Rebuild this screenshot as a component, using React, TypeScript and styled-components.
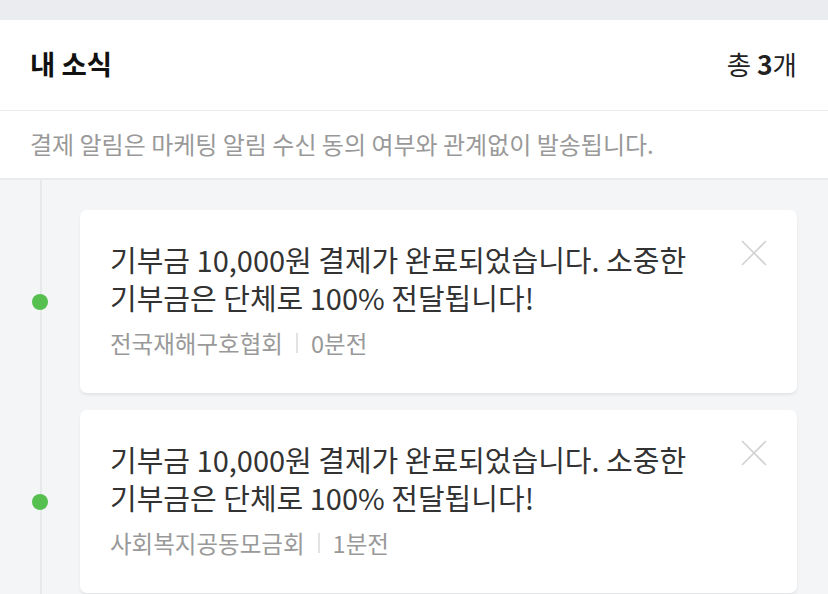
import styled, { createGlobalStyle } from 'styled-components';

type News = {
  id: number;
  message: string;
  org: string;
  time: string;
};

const newsList: News[] = [
  {
    id: 1,
    message: '기부금 10,000원 결제가 완료되었습니다. 소중한 기부금은 단체로 100% 전달됩니다!',
    org: '전국재해구호협회',
    time: '0분전',
  },
  {
    id: 2,
    message: '기부금 10,000원 결제가 완료되었습니다. 소중한 기부금은 단체로 100% 전달됩니다!',
    org: '사회복지공동모금회',
    time: '1분전',
  },
];

const CloseIcon = () => (
  <svg width="26" height="26" viewBox="0 0 26 26" fill="none">
    <path d="M1 1L25 25M25 1L1 25" stroke="#d2d2d2" strokeWidth="1.6" />
  </svg>
);

const NewsItem = (props: News) => {
  return (
    <Item>
      <DotCol>
        <Dot />
      </DotCol>
      <Card>
        <CardBody>
          <Message>{props.message}</Message>
          <Meta>
            <span>{props.org}</span>
            <Bar />
            <span>{props.time}</span>
          </Meta>
        </CardBody>
        <CloseButton aria-label="닫기">
          <CloseIcon />
        </CloseButton>
      </Card>
    </Item>
  );
};

const App = () => {
  return (
    <>
      <GlobalStyle />
      <Page>
        <TopBand />
        <Header>
          <Title>내 소식</Title>
          <Count>
            총 <b>3</b>개
          </Count>
        </Header>
        <Notice>결제 알림은 마케팅 알림 수신 동의 여부와 관계없이 발송됩니다.</Notice>
        <Timeline>
          {newsList.map((news) => (
            <NewsItem key={news.id} {...news} />
          ))}
        </Timeline>
      </Page>
    </>
  );
};

const GlobalStyle = createGlobalStyle`
  html, body {
    margin: 0;
    padding: 0;
    height: 100%;
    overflow: hidden;
    background-color: #f4f5f7;
  }
  body {
    font-family: "Noto Sans CJK KR", "Noto Sans", sans-serif;
    color: #222;
    word-break: keep-all;
  }
`;

const Page = styled.div`
  display: flex;
  flex-direction: column;
  width: 828px;
`;

const TopBand = styled.div`
  height: 20px;
  background-color: #ebecef;
`;

const Header = styled.header`
  display: flex;
  align-items: center;
  justify-content: space-between;
  box-sizing: border-box;
  height: 91px;
  padding: 0 31px 4px 30px;
  background-color: #fff;
  border-bottom: 1px solid #ececec;
`;

const Title = styled.h1`
  margin: 0;
  font-size: 27.5px;
  font-weight: 700;
  color: #111;
`;

const Count = styled.span`
  font-size: 26.5px;
  color: #222;
  b {
    font-weight: 700;
  }
`;

const Notice = styled.p`
  margin: 0;
  display: flex;
  align-items: center;
  box-sizing: border-box;
  height: 69px;
  padding: 0 30px 3px;
  font-size: 24px;
  color: #999;
  background-color: #fff;
  border-bottom: 2px solid #e9eaec;
`;

const Timeline = styled.div`
  display: flex;
  flex-direction: column;
  gap: 17px;
  padding: 30px 31px 30px 0;
  background: linear-gradient(#e7e8ea, #e7e8ea) no-repeat 40px 0 / 2px 100%, #f4f5f7;
`;

const Item = styled.div`
  display: flex;
  align-items: center;
`;

const DotCol = styled.div`
  display: flex;
  justify-content: center;
  width: 82px;
  flex-shrink: 0;
  margin-left: -1px;
  margin-right: -1px;
`;

const Dot = styled.span`
  width: 16px;
  height: 16px;
  border-radius: 50%;
  background-color: #55c04f;
`;

const Card = styled.div`
  flex: 1;
  display: flex;
  gap: 20px;
  padding: 30px 30px 35px 30px;
  background-color: #fff;
  border-radius: 7px;
  box-shadow: 0 2px 3px rgba(0, 0, 0, 0.07);
`;

const CardBody = styled.div`
  flex: 1;
  display: flex;
  flex-direction: column;
  gap: 12px;
`;

const Message = styled.p`
  margin: 0;
  font-size: 29px;
  line-height: 38px;
  color: #333;
`;

const Meta = styled.div`
  display: flex;
  align-items: center;
  gap: 13px;
  height: 30px;
  font-size: 23.5px;
  color: #999;
`;

const Bar = styled.span`
  width: 2px;
  height: 20px;
  background-color: #e2e2e2;
`;

const CloseButton = styled.button`
  align-self: flex-start;
  display: flex;
  padding: 0;
  border: 0;
  background: none;
  cursor: pointer;
`;

export default App;
